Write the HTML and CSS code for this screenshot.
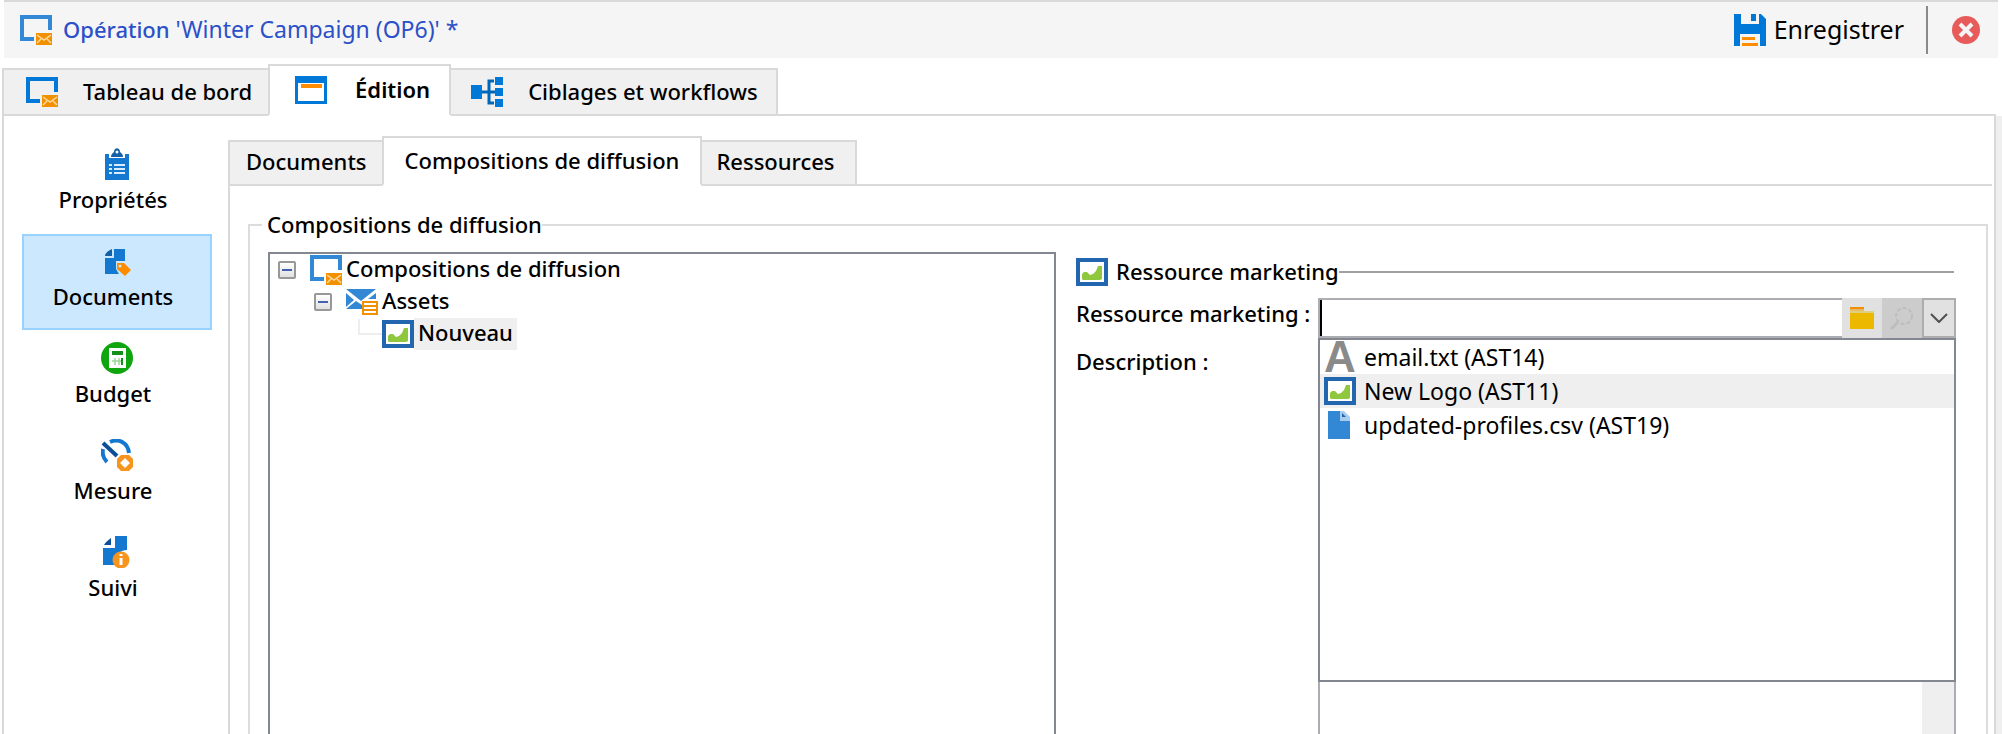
FILE: index.html
```html
<!DOCTYPE html>
<html lang="fr">
<head>
<meta charset="utf-8">
<title>Opération 'Winter Campaign (OP6)'</title>
<link rel="stylesheet" href="styles.css">
</head>
<body>
<svg class="defs" aria-hidden="true">
  <symbol id="screen-mail" viewBox="0 0 32 32">
    <path fill="none" stroke="currentColor" stroke-width="4" d="M30 16V3H2v22h12"/>
    <path fill="#f29100" d="M16 19h16v12H16z"/>
    <path fill="none" stroke="#ffd9a0" stroke-width="1.5" d="M17 21l7 5 7-5M17 29l4-4M31 29l-4-4"/>
  </symbol>
  <symbol id="picture" viewBox="0 0 32 28">
    <path fill="#fff" stroke="#2166ae" stroke-width="4" d="M2 2h28v24H2z"/>
    <path fill="#8fc73e" d="M6 21v-5l2-2h3l3 3 3-1 3-3 2-5h4v13l-2 1H7z"/>
  </symbol>
</svg>

<header class="titlebar">
  <svg class="icon light"><use href="#screen-mail"/></svg>
  <h1 class="title"><span class="kind">Opération</span> 'Winter Campaign (OP6)' *</h1>
  <button class="save" type="button">
    <svg class="icon" viewBox="0 0 32 32"><path fill="#0078d7" d="M0 0h7v10h18V0h2l5 5v27h-6V20H6v12H0zM17 0h5v7h-5z"/><path fill="#ff8c00" d="M8 23h13v3H8zM8 29h16v3H8z"/></svg>
    <span>Enregistrer</span>
  </button>
  <button class="close" type="button" aria-label="Fermer">
    <svg viewBox="0 0 28 28" width="28" height="28"><circle cx="14" cy="14" r="14" fill="#e85b5b"/><path stroke="#f5f5f5" stroke-width="4" d="M8 8l12 12M20 8L8 20"/></svg>
  </button>
</header>

<nav class="tabs main-tabs" aria-label="Sections">
  <button class="tab" type="button"><svg class="icon"><use href="#screen-mail"/></svg><span>Tableau de bord</span></button>
  <button class="tab active" type="button"><svg class="icon" viewBox="0 0 32 28"><path fill="#fff" stroke="#0078d7" stroke-width="3" d="M1.500 1.500h29v25h-29z"/><path fill="#0078d7" d="M0 0h32v7H0z"/><path fill="#ff8c00" d="M6 8h21v4H6z"/></svg><span>Édition</span></button>
  <button class="tab" type="button"><svg class="icon" viewBox="0 0 32 32"><path fill="none" stroke="#0067b8" stroke-width="3" d="M11 16h13M23 5h-5v22h5"/><path fill="#0078d7" d="M0 9h11v14H0zM24 1h8v8h-8zM24 12h8v8h-8zM24 23h8v8h-8z"/></svg><span>Ciblages et workflows</span></button>
</nav>

<div class="panel">
  <nav class="side" aria-label="Édition">
    <button class="side-item" type="button">
      <svg class="icon" viewBox="0 0 32 32"><path fill="#1478d0" d="M4 6h24v26H4z"/><path fill="#fff" d="M8 4h16v6H8z"/><path fill="#135fa8" d="M10 9c0-3 2-4 3-5 0-5 6-5 6 0 1 1 3 2 3 5z"/><circle cx="16" cy="4" r="1.500" fill="#fff"/><path stroke="#d8ecff" stroke-width="2" d="M8 17h3M13 17h11M8 21h3M13 21h11M8 25h3M13 25h11"/></svg>
      <span>Propriétés</span>
    </button>
    <button class="side-item active" type="button">
      <svg class="icon" viewBox="0 0 32 32"><path fill="#1478d0" d="M13 4h11v12h-9v8l3 5H4V13h9z"/><path fill="#135fa8" d="M11 4v7H4c0-3 3-5 7-7z"/><path fill="#ff8c00" d="M16 18h7l7 7-6 6-8-7z"/><circle cx="19" cy="21" r="1.500" fill="#c9e8ff"/></svg>
      <span>Documents</span>
    </button>
    <button class="side-item" type="button">
      <svg class="icon" viewBox="0 0 32 32"><circle cx="16" cy="16" r="16" fill="#0fa50f"/><path fill="#fff" d="M8 6h17v20H8z"/><path fill="#14901a" d="M11 9h11v4H11zM20 16h2v7h-2z"/><path stroke="#9bd89b" stroke-width="1.500" d="M11 19h9M14 16v7M18 16v7"/></svg>
      <span>Budget</span>
    </button>
    <button class="side-item" type="button">
      <svg class="icon" viewBox="0 0 32 32"><path fill="none" stroke="#1478d0" stroke-width="4" d="M9 3c9-4 18 1 19 11M2 10c-1 5 0 9 4 13"/><path stroke="#0d4f97" stroke-width="4" d="M2 4l14 13"/><path fill="#f7941d" fill-rule="evenodd" d="M20 16h8l4 4v8l-4 4h-8l-4-4v-8zM24 19l-5 5 5 5 5-5z"/></svg>
      <span>Mesure</span>
    </button>
    <button class="side-item" type="button">
      <svg class="icon" viewBox="0 0 32 32"><path fill="#1478d0" d="M14 0h12v14c-6 0-12 4-11 15H2V12h12z"/><path fill="#0d4f97" d="M10 2v7H3c1-2 4-5 7-7z"/><circle cx="20" cy="24" r="8.500" fill="#f7941d"/><path stroke="#fff" stroke-width="3" d="M20 18v2M20 22v7"/></svg>
      <span>Suivi</span>
    </button>
  </nav>

  <main class="content">
    <nav class="tabs sub-tabs" aria-label="Documents">
      <button class="tab" type="button"><span>Documents</span></button>
      <button class="tab active" type="button"><span>Compositions de diffusion</span></button>
      <button class="tab" type="button"><span>Ressources</span></button>
    </nav>

    <fieldset class="group">
      <legend>Compositions de diffusion</legend>
      <div class="split">
        <div class="tree" role="tree">
          <div class="row" role="treeitem"><button class="toggle" type="button" aria-label="Réduire"></button><svg class="icon light"><use href="#screen-mail"/></svg><span class="name">Compositions de diffusion</span></div>
          <div class="row level-2" role="treeitem"><button class="toggle" type="button" aria-label="Réduire"></button><svg class="icon" viewBox="0 0 32 28"><path fill="#3388d5" d="M0 1h30L15 13z"/><path fill="#3388d5" d="M0 5l8 7-8 7zM30 5v6h-8zM0 21l10-8 6 4v4z"/><path fill="#fff" stroke="#f29100" stroke-width="2" d="M17 14h14v12H17zM17 18h14M17 22h14"/></svg><span class="name">Assets</span></div>
          <div class="row level-3" role="treeitem"><span class="branch"></span><svg class="icon"><use href="#picture"/></svg><span class="name selected">Nouveau</span></div>
        </div>

        <form class="form">
          <h2 class="section"><svg class="icon"><use href="#picture"/></svg><span>Ressource marketing</span></h2>
          <div class="fields">
            <label for="resource">Ressource marketing :</label>
            <div class="combo">
              <input id="resource" type="text" autocomplete="off">
              <button class="tool" type="button" aria-label="Parcourir"><svg viewBox="0 0 24 22" width="24" height="22"><path fill="#f09000" d="M0 0h14v4H0z"/><path fill="#e9b96a" d="M0 2h14v3H0z"/><path fill="#dfcf80" d="M0 4h24v3H0z"/><path fill="#edb900" d="M0 6h24v16H0z"/></svg></button>
              <button class="tool disabled" type="button" disabled aria-label="Modifier"><svg viewBox="0 0 24 24" width="24" height="24"><circle cx="14" cy="10" r="8" fill="none" stroke="#bdbdbd" stroke-width="2" stroke-dasharray="4 2"/><path stroke="#bdbdbd" stroke-width="3" d="M8 16l-7 7"/></svg></button>
              <button class="tool arrow" type="button" aria-label="Ouvrir la liste"><svg viewBox="0 0 18 10" width="18" height="10"><path fill="none" stroke="#505050" stroke-width="2" d="M1 1l8 8 8-8"/></svg></button>
              <ul class="options" role="listbox">
                <li role="option"><span class="letter" aria-hidden="true">A</span>email.txt (AST14)</li>
                <li class="hover" role="option"><svg class="icon"><use href="#picture"/></svg>New Logo (AST11)</li>
                <li role="option"><svg class="icon" viewBox="0 0 32 28"><path fill="#3388d5" d="M4 0h12v10h10v18H4z"/><path fill="#a9cdee" d="M16 0h4l6 6v4H16z"/><path fill="#2166ae" d="M18 2l4 4h-4z"/></svg>updated-profiles.csv (AST19)</li>
              </ul>
            </div>
            <label for="description">Description :</label>
            <textarea id="description"></textarea>
          </div>
        </form>
      </div>
    </fieldset>
  </main>
</div>
</body>
</html>
```

FILE: styles.css
```css
* { box-sizing: border-box; }

body {
  margin: 0;
  height: 100vh;
  display: flex;
  flex-direction: column;
  overflow: hidden;
  background: #fff;
  color: #000;
  font: 500 22px/30px "Noto Sans", "Open Sans", sans-serif;
}

button, input, textarea {
  font: inherit;
  color: inherit;
  margin: 0;
  padding: 0;
  border: 0;
  border-radius: 0;
  background: none;
}

.defs { position: absolute; width: 0; height: 0; }
.icon { flex: none; width: 32px; height: 32px; color: #0078d7; }
.light { color: #3388d5; }

/* Title bar */
.titlebar {
  flex: none;
  display: flex;
  align-items: center;
  height: 58px;
  margin: 0 4px;
  padding-left: 16px;
  border-top: 2px solid #d9d9d9;
  background: #f5f5f5;
}
.title {
  flex: 1;
  margin: 0;
  padding: 0 0 2px 11px;
  font-size: 23px;
  font-weight: 400;
  color: #2b50c8;
}
.kind { font-size: 22px; font-weight: 500; }
.save {
  display: flex;
  align-items: center;
  gap: 8px;
  height: 48px;
  padding-right: 22px;
  border-right: 2px solid #8a8a8a;
  font-size: 25px;
  font-weight: 400;
}
.save span { padding-bottom: 2px; }
.close { display: flex; padding: 0 18px 0 24px; }

/* Tabs */
.tabs {
  flex: none;
  display: flex;
  align-items: flex-end;
  border-bottom: 2px solid #d9d9d9;
}
.tab {
  display: flex;
  align-items: center;
  justify-content: center;
  margin: 0 -2px -2px 0;
  border: 2px solid #d9d9d9;
  background: #f0f0f0;
}
.tab span { padding-bottom: 2px; }
.tab.active { border-bottom-color: #fff; background: #fff; z-index: 1; }
.main-tabs { height: 52px; margin: 6px 6px 0 2px; }
.main-tabs .tab { height: 48px; padding: 0 16px 0 22px; gap: 25px; }
.main-tabs .active { height: 52px; padding: 0 19px 0 25px; gap: 28px; font-weight: 600; }
.main-tabs .tab:last-child { padding: 0 18px 0 20px; }

/* Panel and side navigation */
.panel {
  flex: 1;
  min-height: 0;
  display: flex;
  margin: 0 6px 0 2px;
  border: solid #d9d9d9;
  border-width: 0 2px;
  box-shadow: 6px 0 #efefef;
}
.side {
  flex: none;
  width: 224px;
  display: flex;
  flex-direction: column;
  gap: 1px;
  padding: 21px 16px 0 18px;
}
.side-item {
  display: flex;
  flex-direction: column;
  align-items: center;
  height: 96px;
  padding-top: 9px;
  border: 2px solid transparent;
}
.side-item span { margin: 4px 8px 0 0; }
.side-item.active { border-color: #99d1ff; background: #cce8ff; }

.content {
  flex: 1;
  min-width: 0;
  display: flex;
  flex-direction: column;
  margin-top: 24px;
  border-left: 2px solid #d9d9d9;
}
.sub-tabs { height: 50px; margin: -4px 2px 0 -2px; }
.sub-tabs .tab { height: 46px; padding: 0 15px 2px 16px; }
.sub-tabs .active { height: 50px; padding: 0 21px; }
.sub-tabs .tab:last-child { padding: 0 20px 2px 14px; }

/* Group */
.group {
  flex: 1;
  min-width: 0;
  margin: 24px 6px 0 18px;
  padding: 12px 30px 0 18px;
  border: 2px solid #dcdcdc;
  border-bottom: 0;
}
.group legend {
  margin-left: -6px;
  padding: 0 0 2px 5px;
  line-height: 28px;
}
.split {
  display: grid;
  grid-template-columns: 788fr 880fr;
  gap: 20px;
  height: 100%;
}

/* Tree */
.tree {
  border: 2px solid #828790;
  border-bottom: 0;
  padding-left: 8px;
}
.row { display: flex; align-items: center; height: 32px; }
.level-2 { padding-left: 36px; }
.level-3 { padding-left: 72px; }
.toggle {
  flex: none;
  display: flex;
  align-items: center;
  justify-content: center;
  width: 18px;
  height: 18px;
  margin-right: 14px;
  border: 2px solid #989898;
  border-radius: 2px;
  background: linear-gradient(#fff, #e0e0e0);
}
.toggle::before { content: ""; width: 10px; height: 2px; background: #4560b0; }
.branch {
  width: 24px;
  height: 16px;
  margin: 0 0 14px 8px;
  border: solid #eee;
  border-width: 0 0 2px 2px;
}
.name { padding: 0 4px 4px; line-height: 28px; }
.selected { background: #efefef; }

/* Form */
.form { min-width: 0; display: flex; flex-direction: column; }
.section {
  display: flex;
  align-items: center;
  margin: 4px 2px 0 0;
  font: inherit;
}
.section span { margin-left: 8px; padding-bottom: 2px; }
.section::after { content: ""; flex: 1; height: 2px; background: #a0a0a0; }
.fields {
  flex: 1;
  display: grid;
  grid-template: 42px 1fr / 242px 1fr;
  margin-top: 10px;
}
.fields label[for="description"] { padding-top: 6px; }
.combo { position: relative; display: flex; height: 40px; }
.combo input {
  flex: 1;
  min-width: 0;
  border: 2px solid #abadb3;
  border-right: 0;
  outline: 0;
  box-shadow: inset 2px 0 #000;
  padding: 0 6px;
}
.tool {
  display: flex;
  align-items: center;
  justify-content: center;
  width: 40px;
  background: #e1e1e1;
}
.tool.disabled { background: #ccc; }
.tool.arrow { width: 34px; border: 2px solid #adadad; }
.options {
  position: absolute;
  top: 40px;
  left: 0;
  right: 0;
  height: 344px;
  margin: 0;
  padding: 0;
  list-style: none;
  border: 2px solid #828790;
  background: #fff;
  font-size: 23px;
  font-weight: 400;
}
.options li { display: flex; align-items: center; gap: 8px; height: 34px; padding-left: 4px; }
.options .hover { background: #efefef; }
.letter { width: 32px; font: 700 44px/32px "Liberation Sans", sans-serif; color: #8a8a8a; }
.fields textarea {
  resize: none;
  outline: 0;
  border: 2px solid #abadb3;
  border-bottom: 0;
  background: linear-gradient(#efefef, #efefef) right / 32px 100% no-repeat;
}
```
